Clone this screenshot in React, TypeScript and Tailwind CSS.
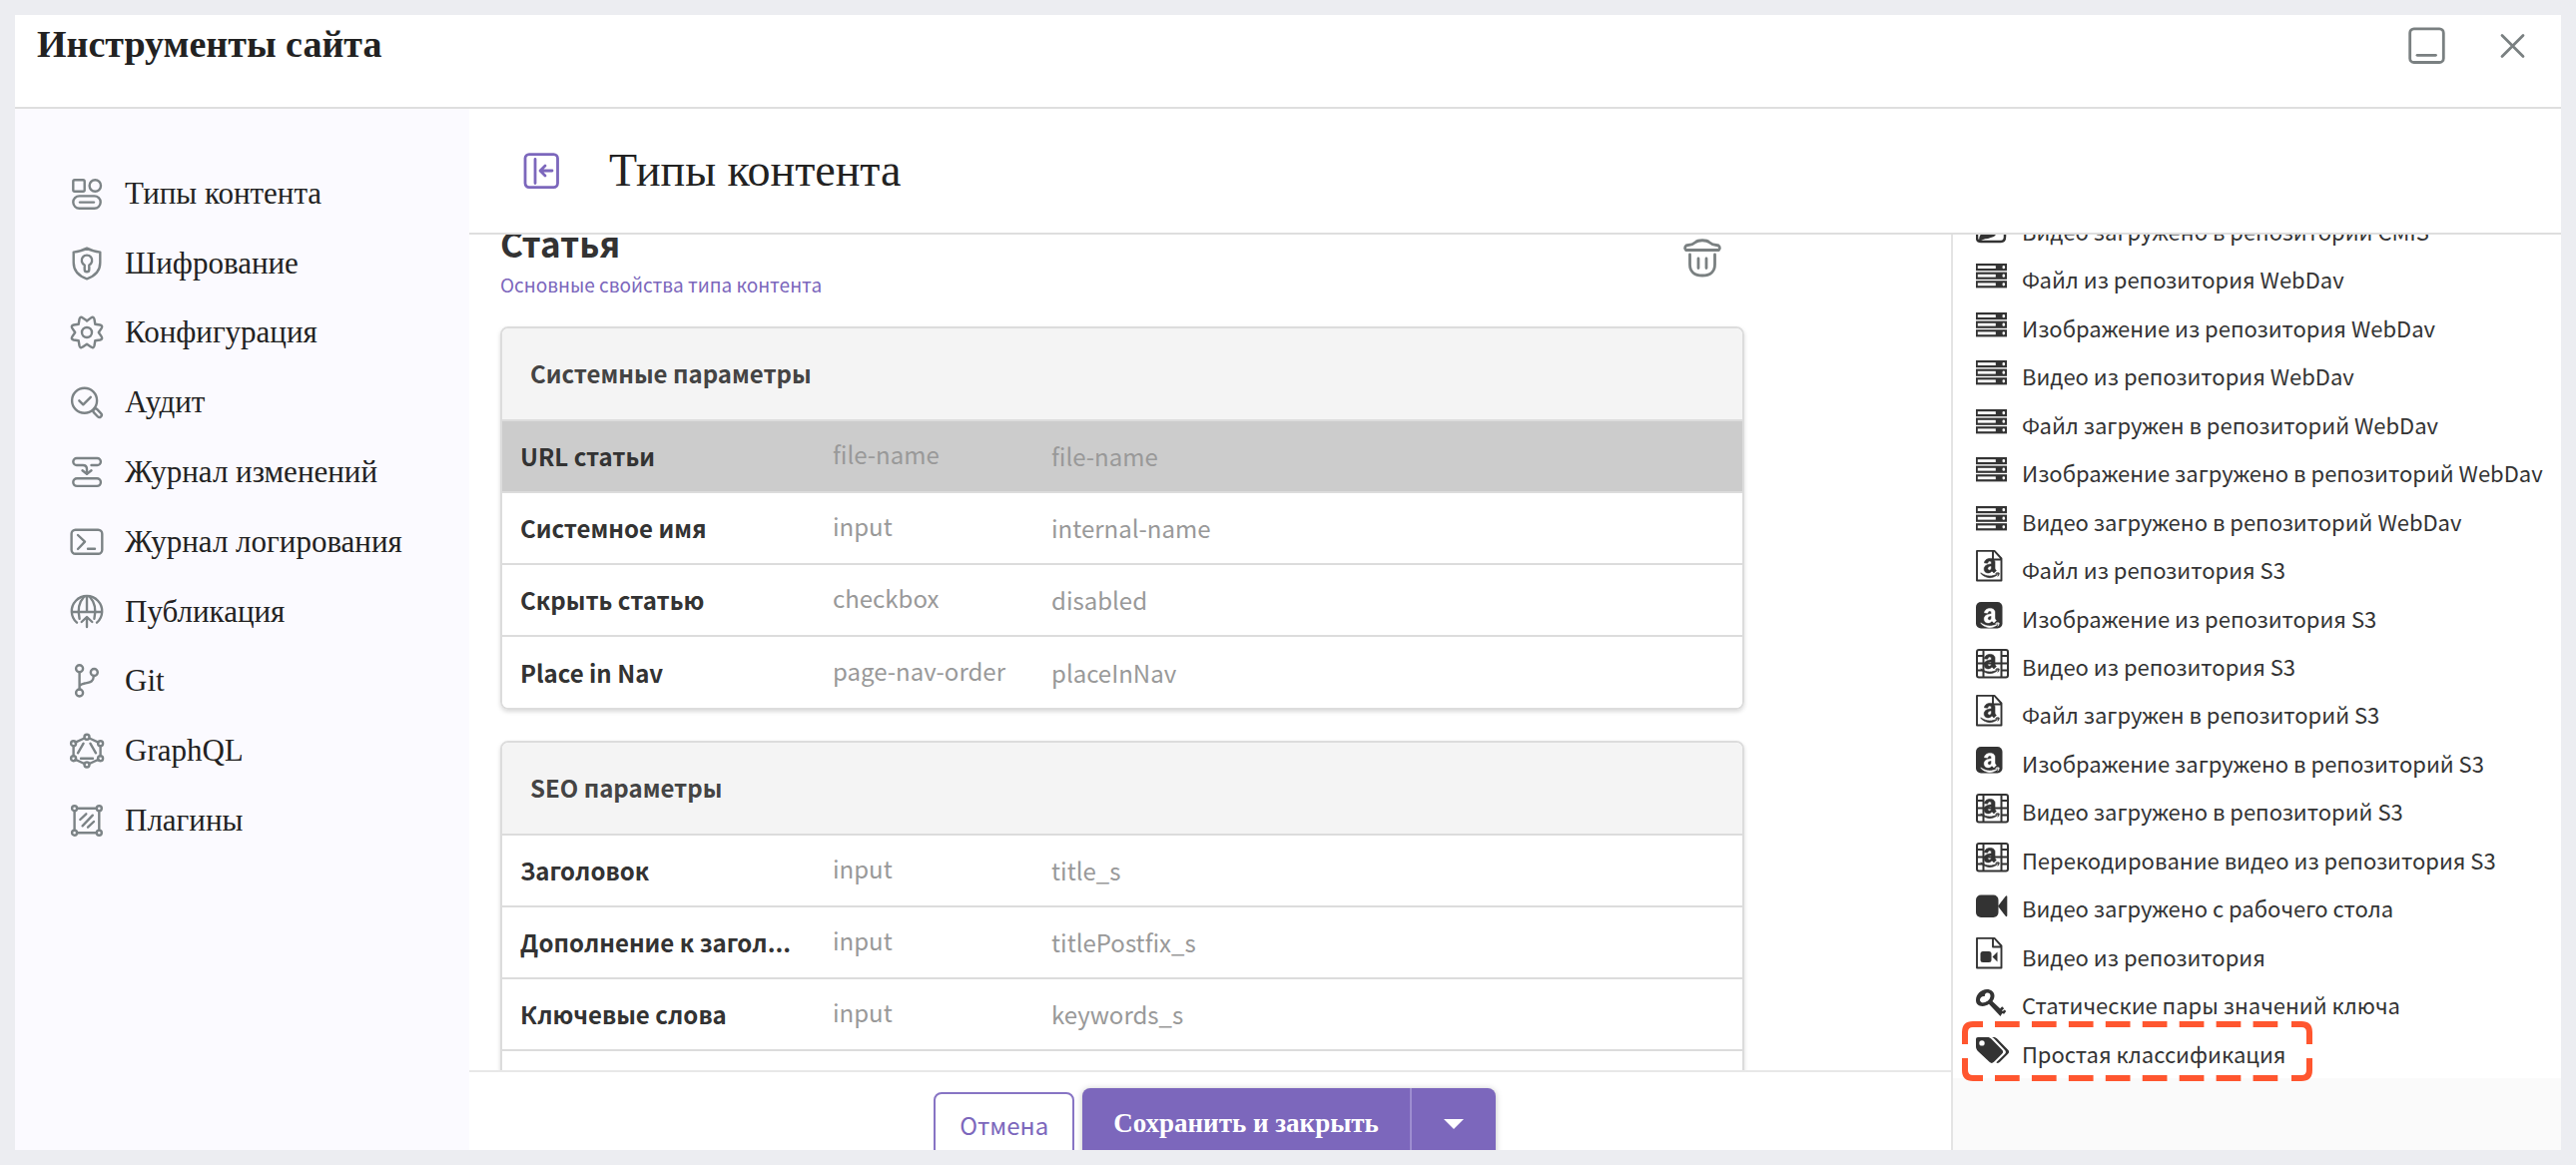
import React from 'react';

import { FaAmazon } from 'react-icons/fa';

type IconProps = { children: React.ReactNode };

// 8-tooth gear outline around the centre of a 36x36 box
const gearPath = () => {
  const at = (r: number, deg: number) => {
    const a = (deg * Math.PI) / 180;
    return `${(18 + r * Math.sin(a)).toFixed(1)} ${(18 - r * Math.cos(a)).toFixed(1)}`;
  };
  let d = `M${at(11.5, 0)}`;
  for (let i = 0; i < 8; i++) {
    const tip = i * 45 + 22.5;
    d += `L${at(15.2, tip - 7)}Q${at(17.6, tip)} ${at(15.2, tip + 7)}L${at(11.8, tip + 22.5)}`;
  }
  return d + 'Z';
};

const MenuIcon: React.FC<IconProps> = ({ children }) => (
  <svg
    width="36"
    height="36"
    viewBox="0 0 36 36"
    fill="none"
    stroke="#7c8386"
    strokeWidth="2.4"
    strokeLinecap="round"
    strokeLinejoin="round"
    className="shrink-0"
    aria-hidden="true"
  >
    {children}
  </svg>
);

const menu = [
  {
    label: 'Типы контента',
    icon: (
      <>
        <rect x="4.3" y="4.3" width="11.4" height="11.4" rx="1.5" />
        <circle cx="26.3" cy="10" r="5.7" />
        <rect x="4.3" y="20.4" width="27.4" height="12.4" rx="6.2" />
        <path d="M11 26.6h14" />
      </>
    ),
  },
  {
    label: 'Шифрование',
    icon: (
      <>
        <path d="M18 2.6C14 4.8 9 6 4.7 6.6V17c0 8 5.3 13.5 13.3 16.3C26 30.5 31.3 25 31.3 17V6.6C27 6 22 4.8 18 2.6Z" />
        <path d="M15.7 19.5a5.2 5.2 0 1 1 4.6 0V24a2.3 2.3 0 0 1-4.6 0Z" />
      </>
    ),
  },
  {
    label: 'Конфигурация',
    icon: (
      <>
        <path d={gearPath()} />
        <circle cx="18" cy="18" r="5" />
      </>
    ),
  },
  {
    label: 'Аудит',
    icon: (
      <>
        <circle cx="15.6" cy="16.3" r="12.5" />
        <path d="m10.3 16.3 4 4 7.5-7.5" />
        <rect x="23.6" y="26.4" width="10" height="4.6" rx="2.3" transform="rotate(46 28.6 28.7)" />
      </>
    ),
  },
  {
    label: 'Журнал изменений',
    icon: (
      <>
        <path d="M22.5 11H28.4a3.5 3.5 0 0 0 0-7H7.8a3.5 3.5 0 0 0 0 7H14c3 0 4 1.5 4 4v4.5" />
        <path d="m13.5 16.2 4.5 3.6 4.5-3.6" />
        <rect x="4.3" y="24.3" width="27.6" height="7.6" rx="3.8" />
      </>
    ),
  },
  {
    label: 'Журнал логирования',
    icon: (
      <>
        <rect x="2.6" y="5.7" width="30.7" height="24" rx="4" />
        <path d="m9 11 7 6.7L9 25M19 24.7h7" />
      </>
    ),
  },
  {
    label: 'Публикация',
    icon: (
      <>
        <path d="M8 28.7A15.2 15.2 0 1 1 28 28.7M2.8 18h30.4M18 2.8V18" />
        <path d="M14.8 3.2C9.5 9 9 18 10.6 24.8M21.2 3.2C26.5 9 27 18 25.4 24.8" />
        <path d="M18 33V23.5M12.7 28l5.3-5 5.3 5" />
      </>
    ),
  },
  {
    label: 'Git',
    icon: (
      <>
        <circle cx="10.6" cy="5.7" r="3.5" />
        <circle cx="25.3" cy="9.5" r="3.5" />
        <circle cx="10.6" cy="30" r="3.5" />
        <path d="M10.6 9.2v17.3M24.9 13c-.5 7-4.5 6.5-9 7.5-2.5.5-4 1-5.3 2.5" />
      </>
    ),
  },
  {
    label: 'GraphQL',
    icon: (
      <>
        <path d="m20.5 5.5 9 4.2M31.6 13.5v9.5M29.5 26.8l-9 4.2M15.5 31l-9-4.2M4.6 23v-9.5M6.5 9.7l9-4.2" />
        <circle cx="18" cy="4.3" r="2.5" />
        <circle cx="31.6" cy="10.7" r="2.5" />
        <circle cx="31.6" cy="25.7" r="2.5" />
        <circle cx="18" cy="32" r="2.5" />
        <circle cx="4.6" cy="25.7" r="2.5" />
        <circle cx="4.6" cy="10.7" r="2.5" />
        <path d="M14.6 10.7 9 20.3M21.4 10.7 27 20.3M12 25.7h12" />
      </>
    ),
  },
  {
    label: 'Плагины',
    icon: (
      <>
        <path d="M8.2 5.7h19.6M30.3 8.2v19.4M27.8 30.2H8.2M5.6 27.6V8.2" />
        <circle cx="5.6" cy="5.7" r="2.5" />
        <circle cx="30.3" cy="5.7" r="2.5" />
        <circle cx="30.3" cy="30.2" r="2.5" />
        <circle cx="5.6" cy="30.2" r="2.5" />
        <path d="m11.3 17 6-5.7M13.6 23.3 23.8 12.7M19 24.7l6-5.7" />
      </>
    ),
  },
];

const SourceIcon: React.FC<IconProps> = ({ children }) => (
  <svg
    width="36"
    height="36"
    viewBox="0 0 36 36"
    fill="#333"
    stroke="none"
    className="shrink-0"
    aria-hidden="true"
  >
    {children}
  </svg>
);

const serverBar = (y: number) => (
  <React.Fragment key={y}>
    <rect x="0" y={y} width="31" height="7.2" />
    <rect x="1.8" y={y + 2.2} width="18" height="2.8" fill="#fff" />
    <rect x="26.5" y={y + 2} width="2.6" height="3.2" rx="1.3" fill="#fff" />
  </React.Fragment>
);

const sheet = (
  <path
    d="M1 5.5V34.5h24.5V12.5L18.5 4.9H1ZM17 5v8.5h8.5"
    fill="none"
    stroke="#333"
    strokeWidth="1.9"
    strokeLinejoin="round"
  />
);

const icons = {
  cmis: (
    <>
      <path d="M1 12v18q0 4 4 4h20q4 0 4-5V12" fill="none" stroke="#333" strokeWidth="2.5" />
      <path d="M3 35c0-6 1-8 3-9-2-3-1-7 3-8h10c3 3 3 8-1 11l-6 2c-4 0-6 1-9 4Z" />
    </>
  ),
  webdav: <>{[8, 16.6, 25.2].map(serverBar)}</>,
  fileS3: (
    <>
      {sheet}
      <FaAmazon x="3" y="11" width="23" height="27" stroke="#333" strokeWidth="14" />
    </>
  ),
  imageS3: (
    <>
      <rect x="0" y="7" width="26.5" height="26.5" rx="5" />
      <FaAmazon x="3" y="12" width="23" height="27" fill="#fff" stroke="#fff" strokeWidth="10" />
    </>
  ),
  videoS3: (
    <>
      <rect x="1" y="7" width="31" height="27.5" rx="2" fill="none" stroke="#333" strokeWidth="2" />
      <path
        d="M7.5 7v27.5M25.5 7v27.5M1 13h6.5M1 20.5h31M1 27.5h6.5M25.5 13H32M25.5 27.5H32"
        fill="none"
        stroke="#333"
        strokeWidth="2"
      />
      <FaAmazon x="3" y="10" width="23" height="27" stroke="#333" strokeWidth="14" />
    </>
  ),
  camera: (
    <>
      <rect x="0" y="10.5" width="22.5" height="22.5" rx="5" />
      <path d="M22 21.7 29.5 12q1.800-1.500 1.800.5v18.500q0 2-1.800.5Z" />
    </>
  ),
  fileVideo: (
    <>
      {sheet}
      <rect x="4.500" y="18" width="11" height="11" rx="2.500" />
      <path d="m16.500 23.500 5-5v10Z" />
    </>
  ),
  key: (
    <path
      fillRule="evenodd"
      d="M11 8c4 0 7.500 2.500 7.500 6.500 0 2.300-.8 4-2 5.500l7.700 7.200 2-2 2 2-2.200 2 .8.900 1.800-1.700 1.700 1.700-2.200 2.700-1.600-.8-.8 1L24.500 35 13 22.700C11 24 9 24.900 6.500 24.900 2.500 24.900 0 22.500 0 19 0 13 5 8 11 8Zm.5 3.500c-2 0-3 2-2.600 3.600C6.500 14.500 4 16.500 4 18.500c0 2 1.800 3.200 3.800 2.800 4-.8 6.700-3.500 6.700-6.800 0-1.800-1.200-3-3-3Z"
    />
  ),
  tags: (
    <>
      <path
        fillRule="evenodd"
        d="M2 7h9.500c1.500 0 3 .6 4 1.700L26 19.500c1.500 1.500 1.500 2.800 0 4.300l-8 8c-1.500 1.500-3 1.500-4.500 0L2 21C.8 19.800 0 18 0 16.500V9c0-1.200.8-2 2-2Zm4 3.200a2.700 2.700 0 1 0 0 5.400 2.700 2.700 0 0 0 0-5.400Z"
      />
      <path d="M15 7h2.500c1.500 0 3 .6 4 1.700L32 19.500c1.500 1.500 1.500 2.800 0 4.300l-8 8c-1.300 1.300-2.600 1.400-3.700.5L28.800 24c1.500-1.500 1.500-2.800 0-4.300L18.500 8.700C17.500 7.600 16.500 7 15 7Z" />
    </>
  ),
};

type Source = { icon: keyof typeof icons; label: string; marked?: boolean };

const sources: Source[] = [
  { icon: 'cmis', label: 'Видео загружено в репозиторий CMIS' },
  { icon: 'webdav', label: 'Файл из репозитория WebDav' },
  { icon: 'webdav', label: 'Изображение из репозитория WebDav' },
  { icon: 'webdav', label: 'Видео из репозитория WebDav' },
  { icon: 'webdav', label: 'Файл загружен в репозиторий WebDav' },
  { icon: 'webdav', label: 'Изображение загружено в репозиторий WebDav' },
  { icon: 'webdav', label: 'Видео загружено в репозиторий WebDav' },
  { icon: 'fileS3', label: 'Файл из репозитория S3' },
  { icon: 'imageS3', label: 'Изображение из репозитория S3' },
  { icon: 'videoS3', label: 'Видео из репозитория S3' },
  { icon: 'fileS3', label: 'Файл загружен в репозиторий S3' },
  { icon: 'imageS3', label: 'Изображение загружено в репозиторий S3' },
  { icon: 'videoS3', label: 'Видео загружено в репозиторий S3' },
  { icon: 'videoS3', label: 'Перекодирование видео из репозитория S3' },
  { icon: 'camera', label: 'Видео загружено с рабочего стола' },
  { icon: 'fileVideo', label: 'Видео из репозитория' },
  { icon: 'key', label: 'Статические пары значений ключа' },
  { icon: 'tags', label: 'Простая классификация', marked: true },
];

const sections = [
  {
    title: 'Системные параметры',
    rows: [
      ['URL статьи', 'file-name', 'file-name'],
      ['Системное имя', 'input', 'internal-name'],
      ['Скрыть статью', 'checkbox', 'disabled'],
      ['Place in Nav', 'page-nav-order', 'placeInNav'],
    ],
  },
  {
    title: 'SEO параметры',
    rows: [
      ['Заголовок', 'input', 'title_s'],
      ['Дополнение к загол...', 'input', 'titlePostfix_s'],
      ['Ключевые слова', 'input', 'keywords_s'],
      ['', '', ''],
    ],
  },
];

const Section: React.FC<{ title: string; rows: string[][]; selected?: number }> = ({
  title,
  rows,
  selected,
}) => (
  <div className="overflow-hidden rounded-lg border-2 border-[#dcdcdc] shadow-[0_2px_4px_rgba(0,0,0,0.15)]">
    <table className="w-full table-fixed border-collapse text-left text-2xl whitespace-nowrap">
      <caption className="h-[91px] bg-[#f4f4f4] px-7 text-left leading-[90px] font-bold text-[#444]">
        {title}
      </caption>
      <colgroup>
        <col className="w-[311px]" />
        <col className="w-[219px]" />
        <col />
      </colgroup>
      <tbody>
        {rows.map(([name, type, value], i) => (
          <tr
            key={value}
            className={
              i === selected
                ? 'h-[72px] border-t-2 border-[#dcdcdc] bg-[#ccc]'
                : 'h-[72px] border-t-2 border-[#dcdcdc] bg-white'
            }
          >
            <th scope="row" className="pl-[18px] font-bold text-[#333]">
              {name}
            </th>
            <td className="pb-1 pl-5 text-[#999]">{type}</td>
            <td className="pl-5 text-[#999]">{value}</td>
          </tr>
        ))}
      </tbody>
    </table>
  </div>
);

const Highlight = () => (
  <svg
    width="354"
    height="62"
    viewBox="0 0 354 62"
    fill="none"
    stroke="#ff562f"
    strokeWidth="6"
    className="absolute -bottom-1 left-2"
    aria-hidden="true"
  >
    <path d="M34 4H320M34 58H320" strokeDasharray="24.7 12.24" />
    <path d="M22 4H12q-8 0-8 8v12M22 58H12q-8 0-8-8V38M331 4h10q8 0 8 8v12M331 58h10q8 0 8-8V38" />
  </svg>
);

export default function App() {
  return (
    <div className="h-screen bg-[#ecedf1] p-[15px]">
      <div className="flex h-full flex-col overflow-hidden bg-white font-['Liberation_Serif',serif] text-[#222]">
        <header className="flex h-[94px] shrink-0 items-start justify-between border-b-2 border-[#dedede] pr-9 pl-[22px]">
          <h1 className="pt-[7px] text-[38px] leading-[44px] font-bold">Инструменты сайта</h1>
          <div className="flex gap-[55px] pt-3">
            <button type="button" aria-label="Свернуть">
              <svg width="37" height="37" viewBox="0 0 37 37" fill="none" stroke="#7a8081" strokeWidth="2.8" strokeLinecap="round">
                <rect x="1.7" y="1.9" width="33.6" height="33.6" rx="4" />
                <path d="M9 28.3h18.5" />
              </svg>
            </button>
            <button type="button" aria-label="Закрыть">
              <svg width="25" height="37" viewBox="0 0 25 37" fill="none" stroke="#7a8081" strokeWidth="2.8" strokeLinecap="round">
                <path d="m2 8.5 21 21M23 8.5l-21 21" />
              </svg>
            </button>
          </div>
        </header>

        <div className="flex min-h-0 flex-1">
          <nav className="w-[455px] shrink-0 bg-[#fbfaff] pt-[50px]">
            <ul className="grid h-[698px] auto-rows-fr">
              {menu.map(({ label, icon }) => (
                <li key={label} className="flex items-center pl-[54px]">
                  <a href="#" className="flex items-center gap-5 text-[31px] leading-9">
                    <MenuIcon>{icon}</MenuIcon>
                    {label}
                  </a>
                </li>
              ))}
            </ul>
          </nav>

          <div className="flex min-w-0 flex-1 flex-col">
            <div className="flex h-[126px] shrink-0 items-center gap-[50px] border-b-2 border-[#dedede] pl-[54px]">
              <button type="button" aria-label="Скрыть меню">
                <svg width="36" height="36" viewBox="0 0 36 36" fill="none" stroke="#7c67bc" strokeWidth="2.8" strokeLinecap="round" strokeLinejoin="round">
                  <rect x="2" y="1.6" width="32.5" height="33" rx="4" />
                  <path d="M12 6.5v24M29 18H17.5M22 13l-5 5 5 5" />
                </svg>
              </button>
              <h2 className="text-[46px] leading-[52px]">Типы контента</h2>
            </div>

            <div className="flex min-h-0 flex-1 font-['Noto_Sans_CJK_SC',sans-serif]">
              <main className="flex min-w-0 flex-1 flex-col">
                <div className="min-h-0 flex-1 overflow-hidden pr-[207px] pl-[31px]">
                  <div className="flex items-start justify-between pr-[22px]">
                    <div>
                      <h3 className="text-[35px] leading-4 font-bold text-[#333]">Статья</h3>
                      <p className="mt-5 text-[19px] leading-7 text-[#7c67bc]">
                        Основные свойства типа контента
                      </p>
                    </div>
                    <button type="button" aria-label="Удалить" className="pt-1">
                      <svg width="40" height="40" viewBox="0 0 40 40" fill="none" stroke="#7a8081" strokeWidth="2.8" strokeLinecap="round" strokeLinejoin="round">
                        <path d="M3.5 11.5c-2-2.5-.5-5 2.5-5 3.5 0 5-1 7-2.8 3-2.6 11-2.6 14 0 2 1.8 3.5 2.8 7 2.8 3 0 4.5 2.5 2.5 5Z" />
                        <path d="M7.5 16v10c0 7 4.5 11 12.5 11s12.5-4 12.5-11V16M16 20v9.5M24 20v9.5" />
                      </svg>
                    </button>
                  </div>
                  <div className="mt-7 flex flex-col gap-[31px]">
                    {sections.map(({ title, rows }, i) => (
                      <Section key={title} title={title} rows={rows} selected={i === 0 ? 0 : undefined} />
                    ))}
                  </div>
                </div>

                <footer className="flex h-20 shrink-0 items-start justify-center gap-2 overflow-hidden border-t-2 border-[#e8e8e8] pt-4 pl-[9px]">
                  <button
                    type="button"
                    className="mt-1 h-[66px] shrink-0 rounded-lg border-2 border-[#8774c4] bg-white px-6 text-2xl text-[#7c67bc]"
                  >
                    Отмена
                  </button>
                  <div className="flex h-[78px] shrink-0 rounded-lg bg-[#7c67bc] text-white shadow-[0_1px_6px_rgba(0,0,0,0.25)]">
                    <button
                      type="button"
                      className="h-[70px] border-r-2 border-[#9d8dd0] px-[31px] font-['Liberation_Serif',serif] text-[27px] font-bold"
                    >
                      Сохранить и закрыть
                    </button>
                    <button type="button" aria-label="Другие действия" className="flex h-[72px] w-[84px] items-center justify-center">
                      <svg width="20" height="10" viewBox="0 0 20 10" fill="#fff">
                        <path d="M0 0h20L10 10Z" />
                      </svg>
                    </button>
                  </div>
                </footer>
              </main>

              <aside className="flex w-[611px] shrink-0 flex-col justify-end overflow-hidden border-l-2 border-[#e4e4e4] bg-[#fafafa]">
                <ul className="grid h-[872px] shrink-0 auto-rows-fr bg-white">
                  {sources.map(({ icon, label, marked }) => (
                    <li
                      key={label}
                      className="relative flex items-start gap-[10px] pl-[23px] text-[22px] leading-[46px] whitespace-nowrap text-[#333]"
                    >
                      <SourceIcon>{icons[icon]}</SourceIcon>
                      {label}
                      {marked && <Highlight />}
                    </li>
                  ))}
                </ul>
                <div className="h-[72px] shrink-0" />
              </aside>
            </div>
          </div>
        </div>
      </div>
    </div>
  );
}
